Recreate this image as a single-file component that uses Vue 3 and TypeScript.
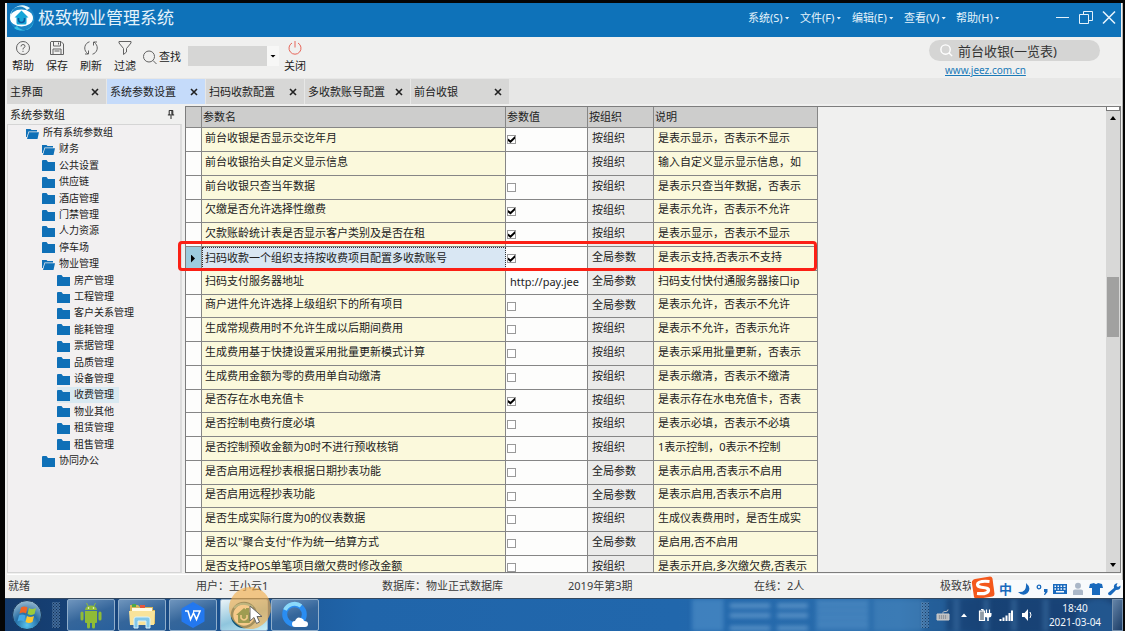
<script setup lang="ts">
import { ref } from 'vue'

interface Param {
  name: string
  kind: 'check' | 'text'
  on?: boolean
  value?: string
  scope: string
  note: string
}
interface TreeItem {
  label: string
  level: number
  open?: boolean
}

const menus = ['系统(S)', '文件(F)', '编辑(E)', '查看(V)', '帮助(H)']
const tabs = ['主界面', '系统参数设置', '扫码收款配置', '多收款账号配置', '前台收银']
const activeTab = ref(1)

const tree: TreeItem[] = [
  { label: '所有系统参数组', level: 0, open: true },
  { label: '财务', level: 1, open: true },
  { label: '公共设置', level: 1 },
  { label: '供应链', level: 1 },
  { label: '酒店管理', level: 1 },
  { label: '门禁管理', level: 1 },
  { label: '人力资源', level: 1 },
  { label: '停车场', level: 1 },
  { label: '物业管理', level: 1, open: true },
  { label: '房产管理', level: 2 },
  { label: '工程管理', level: 2 },
  { label: '客户关系管理', level: 2 },
  { label: '能耗管理', level: 2 },
  { label: '票据管理', level: 2 },
  { label: '品质管理', level: 2 },
  { label: '设备管理', level: 2 },
  { label: '收费管理', level: 2 },
  { label: '物业其他', level: 2 },
  { label: '租赁管理', level: 2 },
  { label: '租售管理', level: 2 },
  { label: '协同办公', level: 1 },
]
const selectedNode = ref('收费管理')

const check = (name: string, on: boolean, scope: string, note: string): Param => ({ name, kind: 'check', on, scope, note })
const org = '按组织'
const all = '全局参数'
const rows = ref<Param[]>([
  check('前台收银是否显示交讫年月', true, org, '是表示显示，否表示不显示'),
  { name: '前台收银抬头自定义显示信息', kind: 'text', value: '', scope: org, note: '输入自定义显示显示信息，如' },
  check('前台收银只查当年数据', false, org, '是表示只查当年数据，否表示'),
  check('欠缴是否允许选择性缴费', true, org, '是表示允许，否表示不允许'),
  check('欠款账龄统计表是否显示客户类别及是否在租', true, org, '是表示显示，否表示不显示'),
  check('扫码收款一个组织支持按收费项目配置多收款账号', true, all, '是表示支持,否表示不支持'),
  { name: '扫码支付服务器地址', kind: 'text', value: 'http://pay.jee', scope: all, note: '扫码支付快付通服务器接口ip' },
  check('商户进件允许选择上级组织下的所有项目', false, all, '是表示允许，否表示不允许'),
  check('生成常规费用时不允许生成以后期间费用', false, org, '是表示不允许，否表示允许'),
  check('生成费用基于快捷设置采用批量更新模式计算', false, org, '是表示采用批量更新，否表示'),
  check('生成费用金额为零的费用单自动缴清', false, org, '是表示缴清，否表示不缴清'),
  check('是否存在水电充值卡', true, org, '是表示存在水电充值卡，否表'),
  check('是否控制电费行度必填', false, org, '是表示必填，否表示不必填'),
  check('是否控制预收金额为0时不进行预收核销', false, org, '1表示控制，0表示不控制'),
  check('是否启用远程抄表根据日期抄表功能', false, all, '是表示启用,否表示不启用'),
  check('是否启用远程抄表功能', false, all, '是表示启用,否表示不启用'),
  check('是否生成实际行度为0的仪表数据', false, org, '生成仪表费用时，是否生成实'),
  check('是否以"聚合支付"作为统一结算方式', false, all, '是启用,否不启用'),
  check('是否支持POS单笔项目缴欠费时修改金额', false, org, '是表示开启,多次缴欠费,否表示'),
])
const currentRow = 5
const status = ['就绪', '用户：王小云1', '数据库：物业正式数据库', '2019年第3期', '在线：2人', '极致软件']
</script>

<template>
  <div class="screen">
    <div class="window">
      <header class="titlebar">
        <svg class="logo" viewBox="0 0 28 28" aria-hidden="true">
          <circle cx="14" cy="14" r="12.500" fill="#1b86c6" />
          <path d="M2 11A12.500 12.500 0 0 1 22 4L19 6A9 9 0 0 0 3 13Z" fill="#e6f8fd" />
          <path d="M26 16A12.500 12.500 0 0 1 6 24L9 22A9 9 0 0 0 25 14Z" fill="#38c1e8" />
          <ellipse cx="13.500" cy="14" rx="11.500" ry="8.500" fill="#fff" />
          <path d="M6.500 13.500L13.500 6.500L20.500 13.500H18.500V19Q18.500 20.500 17 20.500H10Q8.500 20.500 8.500 19V13.500Z" fill="#15a5d8" />
          <path d="M10.500 14V15.500Q10.500 18.500 13.500 18.500Q16.500 18.500 16.500 15.500V14" fill="none" stroke="#0a579c" stroke-width="1.600" />
        </svg>
        <h1>极致物业管理系统</h1>
        <nav class="menus">
          <button v-for="m in menus" :key="m" type="button">{{ m }}<i class="caret"></i></button>
        </nav>
        <div class="controls">
          <button type="button" aria-label="最小化">
            <svg viewBox="0 0 16 16"><path d="M1 7.500H14" /></svg>
          </button>
          <button type="button" aria-label="还原">
            <svg viewBox="0 0 16 16"><path d="M1.500 4.500H10.500V13.500H1.500ZM5.500 4V1.500H14.500V10.500H11" /></svg>
          </button>
          <button type="button" aria-label="关闭窗口">
            <svg viewBox="0 0 16 16"><path d="M2 1.500L14 13.500M14 1.500L2 13.500" stroke-width="1.600" /></svg>
          </button>
        </div>
      </header>

      <div class="toolbar">
        <button class="tool" type="button">
          <svg viewBox="0 0 16 16">
            <circle cx="8" cy="8" r="6.500" />
            <path d="M6 6.500Q6 4.500 8 4.500Q10 4.500 10 6.300Q10 7.500 8 8.500V9.500M8 10.800V12" />
          </svg>
          <span>帮助</span>
        </button>
        <button class="tool" type="button">
          <svg viewBox="0 0 16 16">
            <path d="M2 1.500H12L14.500 4V14.500H1.500V2ZM4.500 1.500V6H11.500V1.500M9.500 2.500V4.500M4 14V9H12V14M5.500 11H10.500" />
          </svg>
          <span>保存</span>
        </button>
        <button class="tool" type="button">
          <svg viewBox="0 0 16 16">
            <path d="M6.500 1.800A6.500 6.500 0 0 0 3.500 12.500L5 14M2 14H5.500V10.500M9.500 14.200A6.500 6.500 0 0 0 12.500 3.500L11 2M14 2H10.500V5.500" />
          </svg>
          <span>刷新</span>
        </button>
        <button class="tool" type="button">
          <svg viewBox="0 0 16 16"><path d="M2 1.500H14V3L9.500 8.500V12L6.500 14.500V8.500L2 3Z" /></svg>
          <span>过滤</span>
        </button>
        <label class="find" for="find">
          <svg viewBox="0 0 16 16"><circle cx="7" cy="7.500" r="5.500" /><path d="M11 11.500L14.500 15" /></svg>
          <span>查找</span>
        </label>
        <div class="picker">
          <select id="find"><option></option></select>
          <i class="caret dark"></i>
        </div>
        <button class="tool power" type="button">
          <svg viewBox="0 0 16 16"><path d="M5 3A6 6 0 1 0 11 3M8 1V7.500" /></svg>
          <span>关闭</span>
        </button>
        <div class="quick">
          <div class="pill">
            <svg viewBox="0 0 16 16"><circle cx="7" cy="7" r="5" /><path d="M10.500 10.500L14 14" /></svg>
            <input type="text" aria-label="功能搜索" value="前台收银(一览表)" />
          </div>
          <a href="#">www.jeez.com.cn</a>
        </div>
      </div>

      <div class="tabs">
        <div v-for="(t, i) in tabs" :key="t" class="tab" :class="{ active: i === activeTab, wide: i === 3 }">
          <button class="name" type="button" @click="activeTab = i">{{ t }}</button>
          <button class="close" type="button" :aria-label="'关闭' + t">
            <svg viewBox="0 0 8 8"><path d="M1 1L7 7M7 1L1 7" /></svg>
          </button>
        </div>
      </div>

      <main class="work">
        <aside class="side">
          <div class="side-head">
            <span>系统参数组</span>
            <button type="button" aria-label="固定">
              <svg viewBox="0 0 8 10"><path d="M2 .5H6V5.500M2 .5V5.500M5 1V5M.5 5.500H7.500M4 6V10" /></svg>
            </button>
          </div>
          <ul class="tree">
            <li v-for="n in tree" :key="n.label" :class="'level' + n.level">
              <button type="button" :class="{ selected: n.label === selectedNode }" @click="selectedNode = n.label">
                <svg viewBox="0 0 13 11" aria-hidden="true">
                  <path v-if="n.open" d="M0 9V1H4.500L5.500 2H11V3.500H2.500L.8 9ZM3 4.300H13L11.500 11H1Z" />
                  <path v-else d="M0 1Q0 0 1 0H4.500L6 2H13V11H0Z" />
                </svg>
                <span>{{ n.label }}</span>
              </button>
            </li>
          </ul>
        </aside>

        <section class="grid-area">
          <div class="grid">
            <div class="sheet">
              <table>
                <colgroup>
                  <col class="c-mark" /><col class="c-name" /><col class="c-value" /><col class="c-org" /><col class="c-note" />
                </colgroup>
                <thead>
                  <tr><th></th><th>参数名</th><th>参数值</th><th>按组织</th><th>说明</th></tr>
                </thead>
                <tbody>
                  <tr v-for="(r, i) in rows" :key="r.name" :class="{ current: i === currentRow }">
                    <td class="mark"><i v-if="i === currentRow" class="pointer"></i></td>
                    <td class="name">{{ r.name }}</td>
                    <td class="value">
                      <input v-if="r.kind === 'check'" v-model="r.on" type="checkbox" :aria-label="r.name" />
                      <input v-else v-model="r.value" type="text" :aria-label="r.name" />
                    </td>
                    <td class="org">{{ r.scope }}</td>
                    <td class="note">{{ r.note }}</td>
                  </tr>
                </tbody>
              </table>
            </div>
            <div class="scroll">
              <i class="split"></i>
              <button type="button" aria-label="向上"><i class="arrow up"></i></button>
              <div class="track"><i class="before"></i><i class="thumb"></i><i class="after"></i></div>
              <button type="button" aria-label="向下"><i class="arrow"></i></button>
            </div>
          </div>
          <div class="highlight"></div>
        </section>
      </main>

      <footer class="status">
        <span v-for="s in status" :key="s">{{ s }}</span>
        <div class="ime">
          <svg class="sogou" viewBox="0 0 24 24">
            <path d="M4 3L19 .5Q21 .5 21.500 2.500L23.500 18Q23.500 20 21.500 20.500L6 23Q3.500 23 3 21L.8 6.500Q.8 4 4 3Z" fill="#f4581c" />
            <path d="M18.500 5.500Q7 4.500 6.500 8.500Q6.500 11 12 11.500Q18 12 17.500 14.500Q16.500 18.500 6 17.500" fill="none" stroke="#fff" stroke-width="3.200" />
          </svg>
          <b>中</b>
          <svg viewBox="0 0 14 14"><path d="M9 1Q15 6 10.500 11Q6 15 1 10Q10 11 9 1Z" /></svg>
          <svg viewBox="0 0 14 14"><circle cx="4" cy="5" r="1.800" fill="none" stroke="#1869bd" stroke-width="1.300" /><path d="M9 7H12.500V10L10 13H9L10 10H9Z" /></svg>
          <svg viewBox="0 0 14 14"><path fill-rule="evenodd" d="M0 2H14V12H0ZM1.500 3.500V5H3V3.500ZM4.500 3.500V5H6V3.500ZM7.500 3.500V5H9V3.500ZM10.500 3.500V5H12.500V3.500ZM1.500 6.200V7.700H3V6.200ZM4.500 6.200V7.700H6V6.200ZM7.500 6.200V7.700H9V6.200ZM10.500 6.200V7.700H12.500V6.200ZM3 9V10.500H11V9Z" /></svg>
          <svg class="dim" viewBox="0 0 14 14"><circle cx="7" cy="3.800" r="3" /><path d="M2 13V9Q2 7.500 4 7.500H10Q12 7.500 12 9V13Z" /></svg>
          <svg viewBox="0 0 14 14"><path d="M1 2L5 1Q7 3 9 1L13 2L14 6H11V13H3V6H0Z" /></svg>
          <svg viewBox="0 0 14 14"><path d="M1 11L7 6Q6 2 10.500 1L9.500 4L11 5L13.500 3.500Q14 8 9 8L4 13Q1 14 1 11Z" /></svg>
        </div>
      </footer>
    </div>

    <div class="taskbar">
      <svg class="skyline" viewBox="0 0 440 33" preserveAspectRatio="none" aria-hidden="true">
        <g>
          <rect x="5" width="32" height="33" fill="#4b8cc6" opacity=".7" />
          <path d="M43 7H84M91 7H122M43 17H84M91 17H122M43 30H84M91 30H122" stroke="#78abd8" stroke-width="5" opacity=".6" />
          <rect x="130" width="54" height="33" fill="#4483bd" opacity=".7" />
          <path d="M132 5H182M132 12H182M132 19H182M132 26H182" stroke="#5f9acb" stroke-width="2" opacity=".6" />
          <rect x="188" width="50" height="33" fill="#4c8ac0" opacity=".5" />
          <rect x="238" width="22" height="33" fill="#255f9a" opacity=".7" />
          <rect x="262" width="178" height="33" fill="#173f73" opacity=".6" />
          <path d="M272 0V33M302 0V33M330 0V33M362 0V33" stroke="#5289ba" stroke-width="6" opacity=".35" />
          <circle cx="415" cy="22" r="22" fill="#2a68a6" opacity=".5" />
        </g>
      </svg>
      <button class="start" type="button" aria-label="开始">
        <svg viewBox="0 0 32 32">
          <defs>
            <radialGradient id="orb" cx=".5" cy=".85" r=".8">
              <stop offset="0" stop-color="#59c5ee" /><stop offset=".5" stop-color="#266fa6" /><stop offset="1" stop-color="#8fb3cb" />
            </radialGradient>
          </defs>
          <circle cx="16" cy="16" r="14.500" fill="url(#orb)" stroke="#16385e" />
          <path d="M10 8.500Q13 6.500 16.500 8.500L15 14.500Q12 12.500 8.500 14.500Z" fill="#ef6425" />
          <path d="M18 9Q21 11 25 9L23.500 15Q20 17 16.500 15Z" fill="#9ccb3c" />
          <path d="M8 16.500Q11 14.500 14.500 16.500L13 22.500Q10 20.500 6.500 22.500Z" fill="#45a8e5" />
          <path d="M16 17Q19 19 23 17L21.500 23Q18 25 14.500 23Z" fill="#fdc62e" />
        </svg>
      </button>
      <i class="grip"></i>
      <div class="apps">
        <button type="button" aria-label="Android">
          <svg viewBox="0 0 28 28" fill="#8fbc36">
            <path d="M8 9Q8.500 4.500 14 4.500Q19.500 4.500 20 9ZM8 10H20V21Q20 22 19 22H9Q8 22 8 21Z" />
            <path d="M5 12V18M23 12V18M11.500 21V26M16.500 21V26" stroke="#8fbc36" stroke-width="3" stroke-linecap="round" />
            <path d="M9.500 2L11 5M18.500 2L17 5" stroke="#8fbc36" />
            <circle cx="11.500" cy="7" r=".8" fill="#fff" /><circle cx="16.500" cy="7" r=".8" fill="#fff" />
          </svg>
        </button>
        <button type="button" aria-label="资源管理器">
          <svg viewBox="0 0 28 28">
            <path d="M2 6V4H10L12 6H25V9H27V23H2Z" fill="#d9b75b" />
            <path d="M4 7H24V10H4Z" fill="#fffbe5" /><path d="M4 3H8V6H4Z" fill="#4ea94a" /><path d="M12 4H17V7H12Z" fill="#e4573d" />
            <path d="M1 10H27L26 24H2Z" fill="#f8e39a" />
            <path d="M6 27V18Q6 16 8 16H20Q22 16 22 18V27H18V20H10V27Z" fill="#82c8ea" stroke="#d9f2fc" />
          </svg>
        </button>
        <button type="button" aria-label="WPS">
          <svg viewBox="0 0 28 28">
            <path d="M14 2L24.500 8V20L14 26L3.500 20V8Z" fill="#2378ef" stroke="#2378ef" stroke-width="2" stroke-linejoin="round" />
            <path d="M6 10H9L11.500 18.500L14.500 12L17.500 18.500L21 10H14" fill="none" stroke="#fff" stroke-width="1.600" />
          </svg>
        </button>
        <button class="running" type="button" aria-label="极致物业管理系统">
          <svg viewBox="0 0 28 28">
            <circle cx="14" cy="14" r="12" fill="#fff" stroke="#0f5578" stroke-width="2.500" />
            <path d="M4 7Q12 -1 23 6" fill="none" stroke="#5dc0dd" stroke-width="2" />
            <path d="M6 14L14 7L16 8.500V7H19V11L22 14H20V21Q20 22 19 22H9Q8 22 8 21V14Z" fill="#007a58" />
            <path d="M11 14V17Q14 21 17 17V14" fill="none" stroke="#fff" stroke-width="1.500" />
          </svg>
        </button>
        <button type="button" aria-label="浏览器">
          <svg viewBox="0 0 28 28">
            <circle cx="13.500" cy="13.500" r="9.800" fill="none" stroke="#2a8df2" stroke-width="5" />
            <path d="M4 9A10.500 10.500 0 0 1 20 5" fill="none" stroke="#8bdafb" stroke-width="4" />
            <path d="M14 26Q11 26 11 23Q11 20 14 20Q16 15 20 17Q23 18 23 20Q27 20 27 23Q27 26 24 26Z" fill="#fff" />
          </svg>
        </button>
        <div class="click-mark"></div>
        <svg class="cursor" viewBox="0 0 14 20" aria-hidden="true"><path d="M1 1V16L5 12.500L7.500 18.500L10.500 17L8 11.500H13Z" fill="#fff" stroke="#666" /></svg>
      </div>
      <i class="grip right"></i>
      <div class="tray">
        <svg viewBox="0 0 14 14"><path d="M1 6H13V12H1Z" fill="#b9bbbd" stroke="#ccc" /><path d="M3 8H11M3 10H11" stroke="#6a7580" stroke-dasharray="1 1" /><path d="M7 6V4.500Q7 3.500 9 3.500H10Q12 3.500 12 1.500" fill="none" stroke="#b5bac0" /></svg>
        <svg viewBox="0 0 14 14"><path d="M4 9L7 5.500L10 9Z" fill="#fff" /></svg>
        <svg viewBox="0 0 14 14"><path d="M1.500 3H6.500V12.500H1.500ZM3 1.500H5V3" fill="#8e9aa5" stroke="#fff" stroke-width="1.200" /><path d="M8.500 1.500V5M11.500 1.500V5" stroke="#fff" stroke-width="1.200" /><path d="M6.500 5H13.500V7Q13.500 9.500 10.800 9.500V13H9.200V9.500Q6.500 9.500 6.500 7Z" fill="#fff" /></svg>
        <svg viewBox="0 0 14 14"><path d="M1.500 13V11M4.500 13V9.500M7.500 13V7.500M10.500 13V5M13 13V2.500" stroke="#fff" stroke-width="2" /></svg>
        <svg viewBox="0 0 14 14"><path d="M2 5H4.500L8 1V13L4.500 9H2Z" fill="#fff" /><path d="M10 4Q12 7 10 10" fill="none" stroke="#fff" /></svg>
      </div>
      <div class="clock"><time>18:40</time><time>2021-03-04</time></div>
      <button class="desktop" type="button" aria-label="显示桌面"></button>
    </div>
  </div>
</template>

<style>
body {
  background: #050505;
}
</style>

<style scoped>
* {
  box-sizing: border-box;
}
.screen {
  display: flex;
  flex-direction: column;
  height: 100vh;
  padding: 3px 2px 0 5px;
  overflow: hidden;
  background: #050505;
  color: #222;
  font: 11px/16px "Noto Sans", "Noto Sans CJK SC", sans-serif;
}
button,
input,
select {
  margin: 0;
  padding: 0;
  border: 0;
  background: none;
  color: inherit;
  font: inherit;
}
svg {
  display: block;
  flex: none;
}
.window {
  flex: 1;
  min-height: 0;
  display: flex;
  flex-direction: column;
  padding: 0 1px 0 2px;
  background: #f0f0ef;
  border-right: 1px solid #b5b5b3;
}

/* title bar */
.titlebar {
  display: flex;
  align-items: center;
  flex: none;
  height: 34px;
  padding: 0 4px 4px 1px;
  background: #0e72b9;
  color: #e4f2fb;
}
.logo {
  width: 28px;
  height: 28px;
}
h1 {
  flex: 1;
  margin: 0 0 0 2px;
  font-size: 17px;
  font-weight: 400;
  line-height: 24px;
}
.menus {
  display: flex;
  margin-right: 47px;
}
.menus button {
  display: flex;
  align-items: center;
  gap: 2px;
  width: 52px;
  white-space: nowrap;
}
.caret {
  width: 5px;
  height: 3px;
  background: currentColor;
  clip-path: polygon(0 0, 100% 0, 50% 100%);
}
.controls {
  display: flex;
  gap: 7px;
}
.controls svg {
  width: 16px;
  height: 16px;
  fill: none;
  stroke: #e4f2fb;
}

/* toolbar */
.toolbar {
  display: flex;
  flex: none;
  height: 41px;
  padding-top: 3px;
}
.tool {
  display: flex;
  flex-direction: column;
  align-items: center;
  gap: 2px;
  width: 32px;
  height: 36px;
  margin-right: 2px;
  white-space: nowrap;
}
.tool svg,
.find svg {
  width: 16px;
  height: 16px;
  fill: none;
  stroke: #626262;
}
.find {
  display: flex;
  align-items: center;
  gap: 1px;
  height: 33px;
  margin-left: -1px;
}
.picker {
  display: flex;
  align-items: center;
  width: 91px;
  height: 20px;
  margin: 6px 0 0 7px;
  position: relative;
}
.picker select {
  width: 100%;
  height: 20px;
  appearance: none;
  border-radius: 0;
  background: linear-gradient(90deg, #d6d6d5 79px, #f7f7f6 79px);
}
.caret.dark {
  position: absolute;
  right: 3px;
  width: 6px;
  background: #000;
  pointer-events: none;
}
.power svg {
  stroke: #e8665a;
}
.quick {
  width: 171px;
  margin-left: auto;
  margin-right: 21px;
}
.pill {
  display: flex;
  align-items: center;
  gap: 4px;
  height: 21px;
  padding-left: 10px;
  border-radius: 11px;
  background: #d5d5d4;
}
.pill svg {
  width: 15px;
  height: 15px;
  fill: none;
  stroke: #fff;
  stroke-width: 1.5px;
}
.pill input {
  min-width: 0;
  flex: 1;
  font-size: 13px;
  color: #333;
}
.quick a {
  display: block;
  padding-left: 16px;
  font-size: 10px;
  line-height: 18px;
  color: #1a7ab8;
}

/* tabs */
.tabs {
  display: flex;
  gap: 1px;
  flex: none;
  height: 26px;
  padding-top: 1px;
  background: #e7e7e6;
}
.tab {
  display: flex;
  align-items: center;
  width: 98px;
  padding: 0 7px 0 3px;
  background: #d7d7d6;
}
.tab.wide {
  width: 105px;
}
.tab:first-child {
  width: 99px;
}
.tab.active {
  background: #c5dbfa;
}
.tab .name {
  flex: 1;
  text-align: left;
  white-space: nowrap;
}
.tab svg {
  width: 8px;
  height: 8px;
  stroke: #222;
  stroke-width: 1.6px;
}

/* work area */
.work {
  flex: 1;
  min-height: 0;
  display: flex;
  gap: 3px;
  padding: 2px 0 1px 0;
}
.side {
  display: flex;
  flex-direction: column;
  width: 175px;
  flex: none;
}
.side-head {
  display: flex;
  justify-content: space-between;
  height: 18px;
  padding: 0 7px 1px 3px;
  align-items: center;
}
.side-head svg {
  width: 8px;
  height: 9px;
  fill: none;
  stroke: #111;
}
.tree {
  flex: 1;
  margin: 0;
  padding: 0;
  list-style: none;
  border: 1px solid #d5d5d5;
  border-right: 2px solid #dcdcdc;
  background: #f2f0f1;
  font-size: 10px;
}
.tree li {
  display: flex;
  height: 16px;
}
.tree li:nth-child(5n + 3),
.tree li:nth-child(5n) {
  height: 17px;
}
.level0 {
  padding-left: 18px;
}
.level1 {
  padding-left: 34px;
}
.level2 {
  padding-left: 49px;
}
.tree button {
  display: flex;
  align-items: center;
  gap: 4px;
  padding-right: 5px;
  white-space: nowrap;
}
.tree span {
  line-height: 14px;
  padding-bottom: 2px;
}
.tree button.selected {
  background: #d9e9f1;
}
.tree svg {
  width: 13px;
  height: 11px;
  fill: #0f70b7;
}

/* parameter grid */
.grid-area {
  flex: 1;
  min-width: 0;
  position: relative;
  display: flex;
}
.grid {
  flex: 1;
  min-width: 0;
  display: flex;
  border: 1px solid #7d7d7d;
}
.sheet {
  flex: 1;
  min-width: 0;
  overflow: hidden;
}
table {
  width: 632px;
  table-layout: fixed;
  border-collapse: separate;
  border-spacing: 0;
}
.c-mark {
  width: 16px;
}
.c-name {
  width: 304px;
}
.c-value {
  width: 82px;
}
.c-org {
  width: 66px;
}
.c-note {
  width: 164px;
}
th,
td {
  padding: 0 0 0 4px;
  border-right: 1px solid #868686;
  border-bottom: 1px solid #868686;
  text-align: left;
  white-space: nowrap;
  overflow: hidden;
  font-weight: 400;
}
th {
  height: 21px;
  padding-left: 1px;
  background: #cdcdcc;
}
td {
  height: 24px;
  background: #fdfdfc;
}
tbody tr:nth-child(4n) td {
  height: 23px;
}
.mark {
  padding: 0;
}
td.name,
td.note {
  padding-bottom: 4px;
  background: #fbf9dc;
}
td.name {
  padding-left: 3px;
}
td.org {
  padding-bottom: 3px;
  background: #ebebea;
}
.value input {
  display: block;
}
.value input[type='checkbox'] {
  appearance: none;
  width: 9px;
  height: 9px;
  margin-left: -3px;
  border: 1px solid #999;
  background: #fff;
}
.value input[type='checkbox']:checked::before {
  content: '';
  display: block;
  width: 7px;
  height: 7px;
  background: #000;
  clip-path: polygon(0 35%, 36% 62%, 100% 0, 100% 38%, 36% 100%, 0 72%);
}
.value input[type='text'] {
  width: 100%;
  height: 18px;
  padding-bottom: 3px;
}
.current td.name {
  background: #d9e7f3;
  border: 1px dotted #333;
  padding: 0 0 3px 2px;
}
.current td.mark {
  background: #9dcbdd;
}
.pointer {
  display: block;
  width: 4px;
  height: 8px;
  margin-left: 5px;
  background: #000;
  clip-path: polygon(0 0, 100% 50%, 0 100%);
}
.highlight {
  position: absolute;
  top: 135px;
  left: -7px;
  width: 639px;
  height: 30px;
  border: 3px solid #fb2015;
  border-radius: 4px;
  pointer-events: none;
}
.scroll {
  display: flex;
  flex-direction: column;
  width: 14px;
  background: #d8d8d7;
}
.split {
  height: 4px;
  border: 1px solid #777;
  border-top: 0;
  background: #fff;
}
.scroll button {
  display: grid;
  place-items: center;
  height: 14px;
}
.arrow {
  width: 6px;
  height: 4px;
  background: #000;
  clip-path: polygon(0 0, 100% 0, 50% 100%);
}
.arrow.up {
  clip-path: polygon(50% 0, 100% 100%, 0 100%);
}
.track {
  flex: 1;
  display: flex;
  flex-direction: column;
}
.before {
  flex: 35;
}
.thumb {
  flex: 14;
  margin: 0 1px;
  background: #a1a1a0;
}
.after {
  flex: 51;
}

/* status line */
.status {
  position: relative;
  display: grid;
  grid-template-columns: repeat(5, minmax(0, 186px)) minmax(0, 1fr);
  align-items: center;
  flex: none;
  height: 24px;
  padding: 0 0 1px 1px;
  border-top: 1px solid #fff;
  color: #3b3b3b;
}
.status span:nth-child(n + 2) {
  padding-left: 2px;
}
.ime {
  position: absolute;
  right: -2px;
  bottom: 0;
  display: flex;
  align-items: center;
  gap: 4px;
  height: 18px;
  padding-right: 2px;
  background: #f8fafc;
}
.ime b {
  width: 14px;
  font-size: 13px;
  color: #1869bd;
}
.ime svg {
  width: 14px;
  height: 14px;
  fill: #1869bd;
}
.ime svg.sogou {
  width: 24px;
  height: 24px;
  margin: 0 0 2px 0;
}
.ime svg.dim {
  fill: #aab7c8;
}

/* task bar */
.taskbar {
  position: relative;
  display: flex;
  align-items: center;
  flex: none;
  height: 33px;
  border-top: 1px solid #33485f;
  background: linear-gradient(90deg, #143a6b, #1a4f8c 18%, #2065aa 32%, #2167ac 60%, #2a6cab 80%, #174577 88%, #1f4b7e);
}
.skyline {
  position: absolute;
  top: 0;
  right: 0;
  width: 39%;
  height: 100%;
}
.skyline g {
  filter: blur(2px);
}
.start {
  width: 32px;
  height: 32px;
  margin: 0 13px 0 6px;
}
.start svg {
  width: 32px;
  height: 32px;
}
.grip {
  width: 8px;
  height: 26px;
  margin-left: -4px;
  background: radial-gradient(circle, #0b1f38 1px, #6f93b8 1px, transparent 2px) 0 0 / 3px 3px;
  opacity: 0.5;
}
.apps {
  position: relative;
  display: flex;
  gap: 3px;
  margin-left: 7px;
}
.apps button {
  display: grid;
  place-items: center;
  width: 48px;
  height: 32px;
  border: 1px solid #90aecb;
  border-radius: 2px;
  background: linear-gradient(160deg, #6f95bd, #35669b 50%, #28609c);
}
.apps button svg {
  width: 28px;
  height: 28px;
}
.apps button.running {
  background: linear-gradient(160deg, #eaf3f7, #8fc5dd 55%, #c9f0f8);
}
.click-mark {
  position: absolute;
  left: 162px;
  bottom: 2px;
  width: 42px;
  height: 42px;
  border-radius: 50%;
  background: rgba(242, 174, 78, 0.66);
  pointer-events: none;
}
.cursor {
  position: absolute;
  left: 182px;
  bottom: 6px;
  width: 14px;
  height: 20px;
  pointer-events: none;
}
.grip.right {
  position: relative;
  margin-left: auto;
}
.tray {
  position: relative;
  display: flex;
  gap: 7px;
  margin-left: 7px;
}
.tray svg {
  width: 14px;
  height: 14px;
}
.clock {
  position: relative;
  display: flex;
  flex-direction: column;
  align-items: center;
  width: 58px;
  margin: 0 8px 0 12px;
  color: #f3f7fb;
  font-size: 10px;
  line-height: 14px;
}
.desktop {
  position: relative;
  width: 11px;
  height: 32px;
  border: 1px solid #7590ad;
  background: linear-gradient(120deg, #6484a8, #1c3d66);
}
</style>
